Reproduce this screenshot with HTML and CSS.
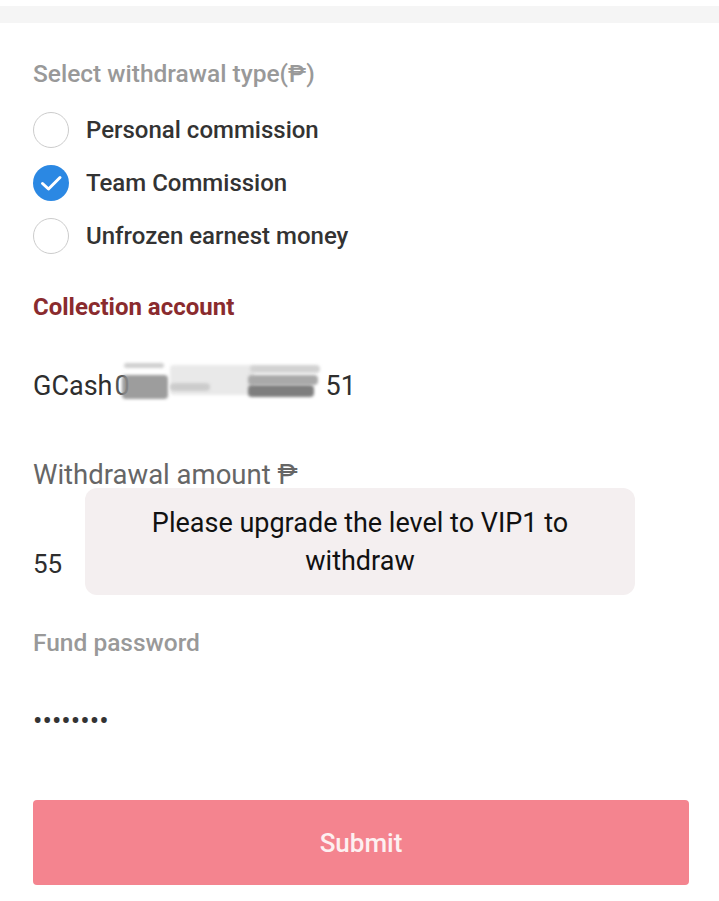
FILE: index.html
```html
<!DOCTYPE html>
<html lang="en">
<head>
<meta charset="UTF-8" />
<meta name="viewport" content="width=device-width, initial-scale=1.0"/>
<title>Withdraw</title>
<link rel="stylesheet" href="styles.css">
</head>
<body>
<div class="top-band"></div>
<main class="withdraw-form">
  <div class="field-label">Select withdrawal type(₱)</div>
  <div class="radio-group">
    <label class="radio-row">
      <span class="radio"></span>
      <span class="radio-text">Personal commission</span>
    </label>
    <label class="radio-row">
      <span class="radio checked">
        <svg viewBox="0 0 36 36" width="36" height="36">
          <circle cx="18" cy="18" r="18" fill="#2b88e3"/>
          <path d="M9.5 18.5 L15.5 24 L27 12.5" fill="none" stroke="#fff" stroke-width="3" stroke-linecap="round" stroke-linejoin="round"/>
        </svg>
      </span>
      <span class="radio-text">Team Commission</span>
    </label>
    <label class="radio-row">
      <span class="radio"></span>
      <span class="radio-text">Unfrozen earnest money</span>
    </label>
  </div>

  <div class="section-title">Collection account</div>
  <div class="account-value">
    GCash<span class="masked">0<span class="scribble s1"></span><span class="scribble s2"></span><span class="scribble s3"></span><span class="scribble s4"></span><span class="scribble s5"></span><span class="scribble s6"></span><span class="scribble s7"></span></span>51
  </div>

  <div class="amount-label">Withdrawal amount ₱</div>
  <div class="amount-value">55</div>

  <div class="field-label pw-label">Fund password</div>
  <div class="pw-value">••••••••</div>

  <button class="submit-btn">Submit</button>
</main>

<div class="toast">Please upgrade the level to VIP1 to<br>withdraw</div>
</body>
</html>
```

FILE: styles.css
```css
body {
  margin: 0;
  padding: 0;
  font-family: Roboto, "Noto Sans", sans-serif;
  background: #ffffff;
  color: #333333;
}

.top-band {
  margin-top: 6px;
  height: 17px;
  background: #f5f5f5;
}

.withdraw-form {
  padding: 36px 31px 0 33px;
  display: flex;
  flex-direction: column;
}

.field-label {
  font-size: 24.5px;
  line-height: 30px;
  font-weight: 500;
  color: #999999;
}

.radio-group {
  margin-top: 14px;
  display: flex;
  flex-direction: column;
}

.radio-row {
  display: flex;
  align-items: center;
  height: 53px;
}

.radio {
  width: 34px;
  height: 34px;
  border: 1.5px solid #cccccc;
  border-radius: 50%;
  flex-shrink: 0;
}

.radio.checked {
  border: none;
  width: 36px;
  height: 36px;
}

.radio.checked svg {
  display: block;
}

.radio-text {
  margin-left: 17px;
  font-size: 24px;
  font-weight: 500;
  color: #333333;
}

.section-title {
  margin-top: 30px;
  font-size: 24px;
  line-height: 30px;
  font-weight: 700;
  color: #8a2b2e;
}

.account-value {
  margin-top: 47px;
  font-size: 27px;
  line-height: 34px;
  color: #2e2e2e;
  display: flex;
  align-items: center;
}

.masked {
  position: relative;
  display: inline-block;
  width: 213px;
  height: 34px;
  padding-left: 2px;
  box-sizing: border-box;
  color: #555555;
}

/* blurred streaks hiding the account number */
.scribble {
  position: absolute;
  border-radius: 4px;
  filter: blur(1.5px);
}

.s1 {
  left: 12px;
  top: -6px;
  width: 40px;
  height: 5px;
  background: #cfcfcf;
}

.s2 {
  left: 10px;
  top: 6px;
  width: 46px;
  height: 24px;
  background: #8c8c8c;
  opacity: 0.85;
}

.s3 {
  left: 58px;
  top: -4px;
  width: 84px;
  height: 30px;
  background: #e4e4e4;
  opacity: 0.8;
}

.s4 {
  left: 58px;
  top: 14px;
  width: 40px;
  height: 8px;
  background: #cccccc;
}

.s5 {
  left: 138px;
  top: -4px;
  width: 70px;
  height: 8px;
  background: #d2d2d2;
}

.s6 {
  left: 136px;
  top: 6px;
  width: 70px;
  height: 10px;
  background: #a9a9a9;
}

.s7 {
  left: 136px;
  top: 16px;
  width: 66px;
  height: 12px;
  background: #7e7e7e;
}

.amount-label {
  margin-top: 55px;
  font-size: 27.5px;
  line-height: 34px;
  color: #666666;
}

.amount-value {
  margin-top: 55px;
  font-size: 26px;
  line-height: 34px;
  color: #2e2e2e;
}

.pw-label {
  margin-top: 47px;
}

.pw-value {
  margin-top: 48px;
  font-size: 28px;
  line-height: 30px;
  letter-spacing: 0;
  color: #333333;
}

.submit-btn {
  margin-top: 64px;
  width: 656px;
  height: 85px;
  border: none;
  border-radius: 4px;
  background: #f4848f;
  color: #fdf0f1;
  font-family: Roboto, "Noto Sans", sans-serif;
  font-size: 26px;
  font-weight: 500;
}

.toast {
  position: absolute;
  left: 85px;
  top: 488px;
  width: 550px;
  height: 107px;
  border-radius: 12px;
  background: #f4eff0;
  display: flex;
  align-items: center;
  justify-content: center;
  text-align: center;
  font-size: 27px;
  line-height: 38px;
  color: #111111;
}
```
